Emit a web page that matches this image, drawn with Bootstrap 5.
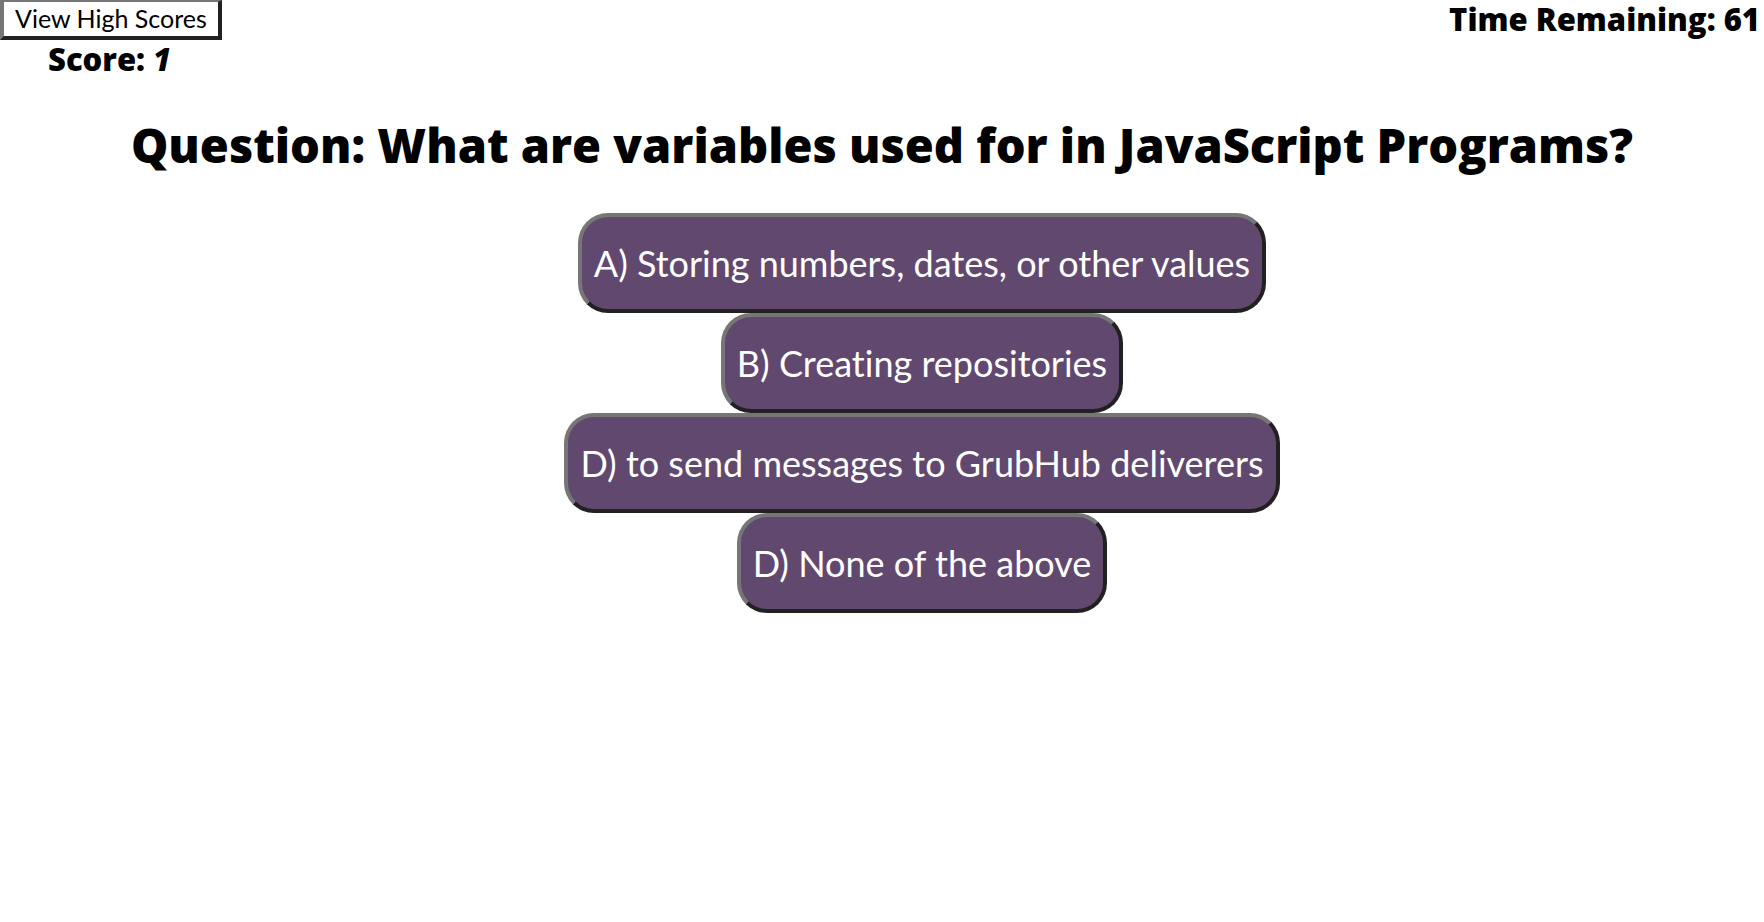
<!DOCTYPE html>
<html lang="en">
<head>
<meta charset="utf-8">
<meta name="viewport" content="width=device-width, initial-scale=1">
<title>JavaScript Quiz</title>
<link href="https://cdn.jsdelivr.net/npm/bootstrap@5.3.0/dist/css/bootstrap.min.css" rel="stylesheet">
<style>
body { font-family: "Gill Sans", Lato, "Liberation Sans", sans-serif; color: #000; background: #fff; }
button { font-variant-ligatures: none; }
.scores-btn { font-size: 25px; line-height: 32px; padding: 0 11px 2px; border: 4px solid; border-color: #767676 #212121 #212121 #767676; border-top-width: 2px; background: #fff; color: #000; }
.status-text, .question { font-family: "Gill Sans", "Open Sans", sans-serif; font-weight: 800; }
.status-text { font-size: 31px; line-height: 38px; }
.score-line { padding-left: 48px; }
.question { font-size: 47px; line-height: 56px; padding-top: 39px; margin-bottom: 40px; }
.answers { padding-left: 80px; }
.answer-btn { font-size: 36px; line-height: 44px; padding: 24px 12px; border: 4px solid; border-color: #767676 #212121 #212121 #767676; border-radius: 30px; background: #61486f; color: #fff; }
</style>
</head>
<body>
<header>
  <div class="d-flex justify-content-between align-items-start">
    <button type="button" class="scores-btn">View High Scores</button>
    <div class="status-text pe-1">Time Remaining: <span>61</span></div>
  </div>
  <div class="status-text score-line">Score: <em>1</em></div>
</header>
<main>
  <h1 class="question text-center">Question: What are variables used for in JavaScript Programs?</h1>
  <ul class="answers list-unstyled d-flex flex-column align-items-center m-0">
    <li><button type="button" class="answer-btn d-block">A) Storing numbers, dates, or other values</button></li>
    <li><button type="button" class="answer-btn d-block">B) Creating repositories</button></li>
    <li><button type="button" class="answer-btn d-block">D) to send messages to GrubHub deliverers</button></li>
    <li><button type="button" class="answer-btn d-block">D) None of the above</button></li>
  </ul>
</main>
<script src="https://cdn.jsdelivr.net/npm/bootstrap@5.3.0/dist/js/bootstrap.bundle.min.js"></script>
</body>
</html>
